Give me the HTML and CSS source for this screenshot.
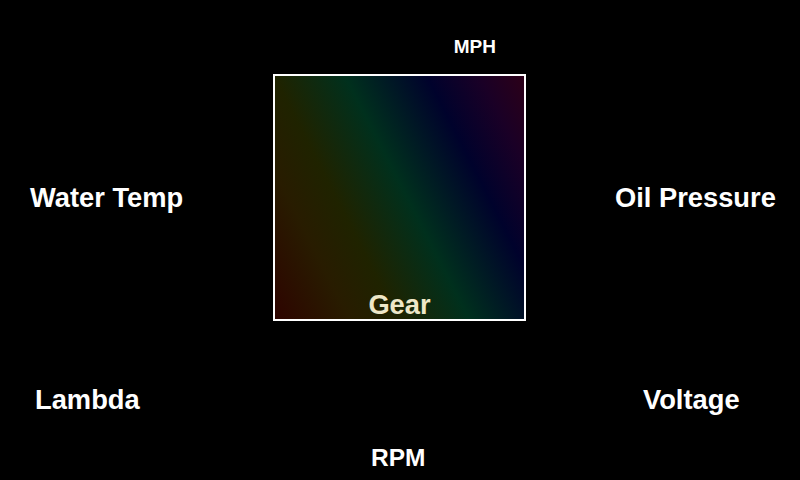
FILE: index.html
```html
<!DOCTYPE html>
<html lang="en">
<head>
    <meta charset="UTF-8">
    <meta name="viewport" content="width=device-width, initial-scale=1.0">
    <title>Dash</title>
    <link rel="stylesheet" href="styles.css">
</head>
<body>
    <div id="dash">
        <div class="gauge" id="mph">MPH</div>

        <div class="gauge" id="water">Water Temp</div>
        <div id="gear-box">
            <span id="gear">Gear</span>
        </div>
        <div class="gauge" id="oil">Oil Pressure</div>

        <div class="gauge" id="lambda">Lambda</div>
        <div class="gauge" id="rpm">RPM</div>
        <div class="gauge" id="voltage">Voltage</div>
    </div>
</body>
</html>
```

FILE: styles.css
```css
/* Stil general */
body {
    font-family: "Liberation Sans", Arial, sans-serif;
    font-weight: bold;
    background-color: #000000;
    color: #ffffff;
    margin: 0;
}

/* Grila principala: stanga / centru / dreapta */
#dash {
    display: grid;
    grid-template-columns: 273px 253px 1fr;
    grid-template-rows: 74px 247px 1fr;
    width: 800px;
    height: 480px;
}

.gauge {
    font-size: 27.3px;
    line-height: 27px;
    white-space: nowrap;
}

#mph {
    grid-column: 2;
    grid-row: 1;
    align-self: end;
    font-size: 19px;
    line-height: 19px;
    text-align: right;
    padding-right: 30px;
    padding-bottom: 18px;
}

#water {
    grid-column: 1;
    grid-row: 2;
    margin-top: 110px;
    padding-left: 30px;
}

#oil {
    grid-column: 3;
    grid-row: 2;
    margin-top: 110px;
    padding-left: 89px;
}

/* Patratul din mijloc */
#gear-box {
    grid-column: 2;
    grid-row: 2;
    border: 2px solid #ffffff;
    background: linear-gradient(63deg, #2e0400 0%, #281c00 20%, #1f2300 33%, #00301d 52%, #00022c 74%, #1a0026 88%, #2c0018 100%);
    display: flex;
    align-items: flex-end;
    justify-content: center;
}

#gear {
    color: #eee7c8;
    font-size: 27.3px;
    line-height: 27px;
    margin-bottom: 1px;
}

#lambda {
    grid-column: 1;
    grid-row: 3;
    margin-top: 65px;
    padding-left: 35px;
}

#rpm {
    grid-column: 2;
    grid-row: 3;
    margin-top: 125px;
    padding-left: 98px;
    font-size: 24.5px;
    line-height: 24px;
}

#voltage {
    grid-column: 3;
    grid-row: 3;
    margin-top: 65px;
    padding-left: 117px;
}
```
